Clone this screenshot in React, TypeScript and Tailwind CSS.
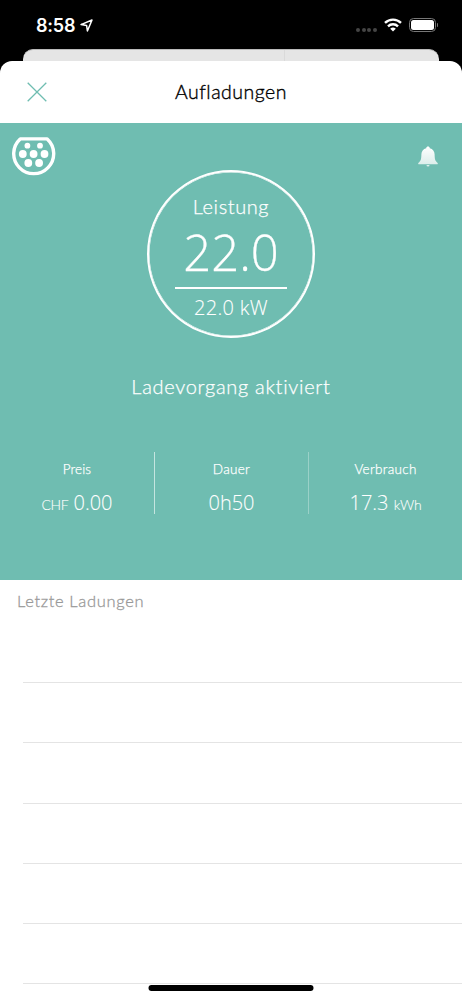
const rows = [0, 1, 2, 3, 4, 5]

function StatusBar() {
  return (
    <div className="flex h-[49px] items-start justify-between pl-[36px] pr-[24px] pt-[15px] text-white">
      <div className="flex items-center gap-[5px]">
        <span className="font-['Inter'] text-[18px] leading-[21px] font-semibold tracking-[-0.2px]">8:58</span>
        <svg width="13" height="13" viewBox="0 0 13 13" fill="none" stroke="currentColor" strokeWidth="1.5" strokeLinejoin="round">
          <path d="M1 5.6 12 1 7.4 12 6.6 6.4Z" />
        </svg>
      </div>
      <div className="flex items-start pt-[3px]">
        <div className="mt-[10px] mr-[7px] flex gap-[1.5px]">
          {[0, 1, 2, 3].map((i) => (
            <span key={i} className="size-[4px] rounded-full bg-[#454545]" />
          ))}
        </div>
        <svg className="mr-[7px]" width="18" height="14" viewBox="0 0 18 14" fill="none" stroke="currentColor" strokeWidth="2.4">
          <path d="M1 4.9a11.4 11.4 0 0 1 16 0" />
          <path d="M4 8.3a7.2 7.2 0 0 1 10 0" />
          <path d="M9 13.6 6.2 10.8a4 4 0 0 1 5.6 0Z" fill="currentColor" stroke="none" />
        </svg>
        <div className="flex h-[14px] w-[27px] rounded-[4.5px] border border-[#777] p-[1px]">
          <div className="flex-1 rounded-[2.5px] bg-white" />
        </div>
        <div className="mt-[5px] ml-[1px] h-[4px] w-[1.5px] rounded-r-full bg-[#777]" />
      </div>
    </div>
  )
}

function PlugIcon() {
  return (
    <svg width="44" height="40" viewBox="0 0 44 40">
      <path d="M8.2 1.9h27A20 20 0 1 1 8.2 1.9Z" fill="none" stroke="white" strokeWidth="3.4" strokeLinejoin="round" />
      <g fill="white">
        <circle cx="15.4" cy="8.7" r="2.9" />
        <circle cx="28" cy="8.7" r="2.9" />
        <circle cx="10.8" cy="17" r="3.9" />
        <circle cx="21.6" cy="17" r="3.9" />
        <circle cx="32.5" cy="17" r="3.9" />
        <circle cx="16.3" cy="26" r="3.9" />
        <circle cx="27.1" cy="26" r="3.9" />
      </g>
    </svg>
  )
}

function BellIcon() {
  return (
    <svg width="20" height="22" viewBox="0 0 20 22">
      <defs>
        <linearGradient id="bell" x1="0" y1="0" x2="0" y2="1">
          <stop offset="0" stopColor="#fff" />
          <stop offset="1" stopColor="#dceeeb" />
        </linearGradient>
      </defs>
      <path
        d="M10 .5c1.1 0 1.7.7 1.8 1.7 3 .8 4.7 3 4.8 6.1.1 4.4.5 6.2 2 7.6.6.6 1.2.9 1.2 1.5 0 .6-.5.8-1.2.8H1.4c-.7 0-1.2-.2-1.2-.8 0-.6.6-.9 1.2-1.5 1.5-1.4 1.9-3.2 2-7.6.1-3.1 1.8-5.3 4.8-6.1C8.3 1.2 8.9.5 10 .5Z"
        fill="url(#bell)"
      />
      <path d="M8.5 18.9h3a1.5 1.7 0 0 1-3 0Z" fill="#dceeeb" />
    </svg>
  )
}

export default function App() {
  return (
    <div className="flex h-[1000px] w-[462px] flex-col overflow-hidden bg-black font-['Lato',sans-serif]">
      <StatusBar />
      {/* Page behind the sheet */}
      <div className="mx-[23px] flex h-[12px] shrink-0 rounded-t-[10px] border-t border-[#bbb] bg-[#e5e5e5]">
        <div className="w-[262px] border-r border-[#dadada]" />
      </div>

      <div className="relative flex flex-1 flex-col overflow-hidden rounded-t-[12px] bg-white">
        <header className="grid h-[62px] shrink-0 grid-cols-[74px_1fr_74px] items-center">
          <svg className="ml-[27px]" width="20" height="20" viewBox="0 0 20 20" stroke="#6fbdb1" strokeWidth="1.3">
            <path d="M.7.7 19.3 19.3M19.3.7.7 19.3" />
          </svg>
          <h1 className="text-center text-[19.5px] leading-[24px] font-light tracking-[0.5px] text-black [-webkit-text-stroke:0.35px_currentColor]">Aufladungen</h1>
        </header>

        <main className="flex h-[457px] shrink-0 flex-col bg-[#6fbdb1] font-light text-white [-webkit-text-stroke:0.25px_currentColor]">
          <div className="flex h-[47px] items-start justify-between pl-[12px] pr-[24px] pt-[14px]">
            <PlugIcon />
            <div className="pt-[9px]">
              <BellIcon />
            </div>
          </div>

          <div className="mx-auto flex size-[168px] shrink-0 flex-col items-center rounded-full border-2 border-white pt-[22px] shadow-[inset_0_0_0_0.5px_white]">
            <span className="text-[20px] leading-[24px] tracking-[0.6px]">Leistung</span>
            <span className="mt-[5px] font-['Open_Sans'] text-[49px] leading-[59px] [-webkit-text-stroke:0.3px_currentColor]">22.0</span>
            <div className="mt-[5px] h-[2px] w-[112px] shrink-0 bg-white" />
            <span className="mt-[7px] font-['Open_Sans'] text-[20px] leading-[24px] tracking-[0.3px] [-webkit-text-stroke:0.1px_currentColor]">22.0 kW</span>
          </div>

          <p className="mt-[36px] text-center text-[20px] leading-[24px] tracking-[0.7px]">Ladevorgang aktiviert</p>

          <div className="mt-[54px] grid h-[62px] grid-cols-[155px_154px_1fr] text-center">
            <div className="h-[62px] border-r border-white/60 pt-[8px]">
              <div className="text-[13.5px] leading-[18px] tracking-[0.1px]">Preis</div>
              <div className="mt-[13px] font-['Open_Sans'] text-[20px] leading-[24px] [-webkit-text-stroke:0.1px_currentColor]">
                <span className="font-['Lato'] text-[14px] leading-none tracking-[-0.4px]">CHF</span> 0.00
              </div>
            </div>
            <div className="h-[62px] border-r border-white/30 pt-[8px]">
              <div className="text-[13.5px] leading-[18px] tracking-[0.3px]">Dauer</div>
              <div className="mt-[13px] font-['Open_Sans'] text-[20px] leading-[24px] [-webkit-text-stroke:0.1px_currentColor]">0h50</div>
            </div>
            <div className="h-[62px] pt-[8px]">
              <div className="text-[13.5px] leading-[18px] tracking-[0.3px]">Verbrauch</div>
              <div className="mt-[13px] font-['Open_Sans'] text-[20px] leading-[24px] [-webkit-text-stroke:0.1px_currentColor]">
                17.3 <span className="font-['Lato'] text-[14px] leading-none tracking-[-0.2px]">kWh</span>
              </div>
            </div>
          </div>
        </main>

        <section className="flex flex-col">
          <h2 className="h-[43px] pl-[17px] pt-[11px] text-[16.5px] leading-[20px] font-light tracking-[0.65px] text-[#999] [-webkit-text-stroke:0.3px_currentColor]">Letzte Ladungen</h2>
          {rows.map((row) => (
            <div key={row} className="ml-[23px] h-[60.2px] shrink-0 border-b border-[#e4e4e4]" />
          ))}
        </section>

        {/* Home indicator */}
        <div className="absolute bottom-[9px] left-1/2 h-[6px] w-[165px] -translate-x-1/2 rounded-full bg-black" />
      </div>
    </div>
  )
}
